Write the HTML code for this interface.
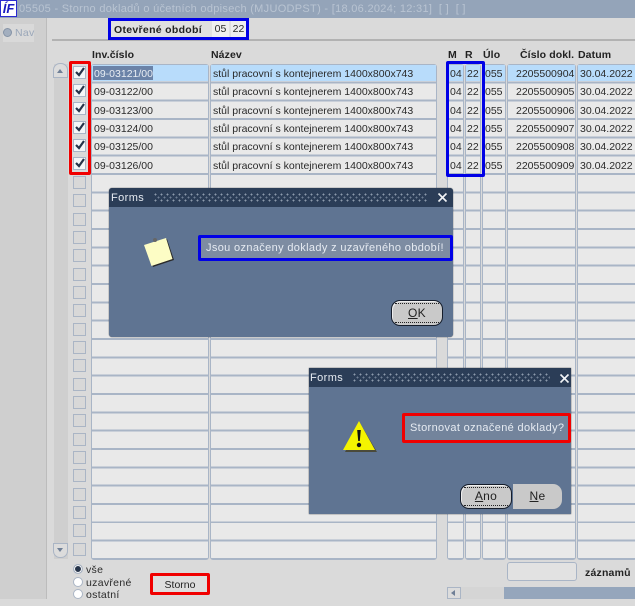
<!DOCTYPE html>
<html><head><meta charset="utf-8">
<style>
html,body{margin:0;padding:0;background:#dadada}
body{width:635px;height:599px;overflow:hidden;position:relative;background:#dadada;font-family:"Liberation Sans",sans-serif;font-size:10.5px;color:#2a2a2a;filter:blur(.3px)}
div,span{position:absolute;box-sizing:border-box;white-space:nowrap}
.col{top:64px;height:495.5px;background-color:#a9b5c6;background-image:repeating-linear-gradient(to bottom,#e9e9e9 0,#e9e9e9 16.35px,#a9b5c6 16.35px,#a9b5c6 18.33px);border:1px solid #a9b5c6;border-radius:3px}
.t{line-height:21px;height:21px}
.h{font-weight:bold;top:48px;line-height:14px;color:#222;font-size:10.5px;letter-spacing:.1px}
.cb{left:73px;width:13px;height:13px;background:#d8d8d8;border:1px solid #aab5c5}
.dlg{background:#5f7492;box-shadow:0 0 1px #222}
.dt{left:0;top:0;right:0;height:19px;background:#2b3d57}
.dots{top:5px;height:9px;background-image:radial-gradient(circle at 1.5px 1.5px,#8d9aac 0.8px,transparent 1px),radial-gradient(circle at 4.5px 4.5px,#6f7e94 0.8px,transparent 1px);background-size:6px 6px}
.w{color:#e6ebf2}
</style></head>
<body>
<!-- title -->
<div style="left:0;top:0;width:635px;height:18px;background:#94a4b9"></div>
<div style="left:0;top:0;width:17px;height:17px;background:#fff;border:1px solid #2a2ad0;color:#1a1ac0;font:italic bold 13px/15px 'Liberation Sans',sans-serif;text-align:center">ÍF</div>
<div style="left:19px;top:1px;line-height:16px;font-size:11px;color:#b9c4d2;letter-spacing:.3px">05505 - Storno dokladů o účetních odpisech (MJUODPST) - [18.06.2024; 12:31] &nbsp;[ ] &nbsp;[ ]</div>
<!-- left strip -->
<div style="left:0;top:18px;width:47px;height:581px;background:#cfcfcf;border-right:1px solid #bcbcbc"></div>
<div style="left:3px;top:24px;width:31px;height:18px;background:#d9d9d9"></div>
<div style="left:3px;top:28px;width:9px;height:9px;border-radius:50%;background:#a3afbf;border:1px solid #8593a6"></div>
<div style="left:15px;top:25px;line-height:16px;font-size:10.5px;color:#9aa7b9;letter-spacing:.3px">Nav</div>
<div style="left:47px;top:18px;width:588px;height:581px;background:#dadada"></div>
<div style="left:52px;top:39px;width:583px;height:2px;background:#b2b2b2"></div>
<!-- period -->
<div style="left:108px;top:18px;width:141px;height:22px;background:#e0e0e0;border:3px solid #0000e6"></div>
<div style="left:114px;top:22px;line-height:16px;font-weight:bold;font-size:10.5px;color:#222;letter-spacing:.3px">Otevřené období</div>
<div style="left:212px;top:21px;width:17px;height:16px;background:#efefef;line-height:17px;text-align:center">05</div>
<div style="left:231px;top:21px;width:15px;height:16px;background:#efefef;line-height:17px;text-align:center">22</div>
<!-- headers -->
<div class="h" style="left:92px">Inv.číslo</div>
<div class="h" style="left:211px">Název</div>
<div class="h" style="left:448px">M</div>
<div class="h" style="left:465px">R</div>
<div class="h" style="left:483px">Úlo</div>
<div class="h" style="left:520px">Číslo dokl.</div>
<div class="h" style="left:578px">Datum</div>
<!-- scrollbar -->
<div style="left:54px;top:64px;width:14px;height:495px;background:#cfcfcf"></div>
<div style="left:53px;top:63px;width:15px;height:15px;background:#dcdcdc;border:1px solid #aab5c5;border-radius:7px 7px 0 0"></div>
<div style="left:57px;top:69px;width:0;height:0;border:3.5px solid transparent;border-top:0;border-bottom:4px solid #6f7f96"></div>
<div style="left:53px;top:543px;width:15px;height:15px;background:#dcdcdc;border:1px solid #aab5c5;border-radius:0 0 7px 7px"></div>
<div style="left:57px;top:548px;width:0;height:0;border:3.5px solid transparent;border-bottom:0;border-top:4px solid #6f7f96"></div>
<!-- columns -->
<div class="col" style="left:91px;width:118px"></div>
<div class="col" style="left:210px;width:227px"></div>
<div class="col" style="left:447px;width:17px"></div>
<div class="col" style="left:465px;width:16px"></div>
<div class="col" style="left:482px;width:24px"></div>
<div class="col" style="left:507px;width:69px"></div>
<div class="col" style="left:577px;width:60px"></div>
<!-- current row -->
<div style="left:92px;top:65px;width:116px;height:16px;background:#b8dcfb"></div>
<div style="left:211px;top:65px;width:225px;height:16px;background:#b8dcfb"></div>
<div style="left:448px;top:65px;width:15px;height:16px;background:#b8dcfb"></div>
<div style="left:466px;top:65px;width:14px;height:16px;background:#b8dcfb"></div>
<div style="left:483px;top:65px;width:22px;height:16px;background:#b8dcfb"></div>
<div style="left:508px;top:65px;width:67px;height:16px;background:#b8dcfb"></div>
<div style="left:578px;top:65px;width:57px;height:16px;background:#b8dcfb"></div>
<div style="left:93px;top:66px;width:60px;height:14px;background:#6b83a8"></div>
<!-- empty checkboxes -->
<div class="cb" style="top:176px"></div><div class="cb" style="top:194px"></div><div class="cb" style="top:213px"></div><div class="cb" style="top:231px"></div><div class="cb" style="top:249px"></div><div class="cb" style="top:268px"></div><div class="cb" style="top:286px"></div><div class="cb" style="top:304px"></div><div class="cb" style="top:323px"></div><div class="cb" style="top:341px"></div><div class="cb" style="top:359px"></div><div class="cb" style="top:378px"></div><div class="cb" style="top:396px"></div><div class="cb" style="top:414px"></div><div class="cb" style="top:433px"></div><div class="cb" style="top:451px"></div><div class="cb" style="top:469px"></div><div class="cb" style="top:488px"></div><div class="cb" style="top:506px"></div><div class="cb" style="top:524px"></div><div class="cb" style="top:543px"></div>
<!-- checked boxes -->
<svg style="position:absolute;left:72px;top:64px" width="16" height="112" viewBox="0 0 16 112">
<g fill="#f4f6f8" stroke="#a9b5c6"><rect x="1.5" y="2.5" width="12" height="12"/><rect x="1.5" y="20.5" width="12" height="12"/><rect x="1.5" y="38.5" width="12" height="12"/><rect x="1.5" y="57.5" width="12" height="12"/><rect x="1.5" y="75.5" width="12" height="12"/><rect x="1.5" y="93.5" width="12" height="12"/></g>
<g fill="none" stroke="#26344a" stroke-width="2.2"><path d="M4 8l3 3 5-7"/><path d="M4 26l3 3 5-7"/><path d="M4 44l3 3 5-7"/><path d="M4 63l3 3 5-7"/><path d="M4 81l3 3 5-7"/><path d="M4 99l3 3 5-7"/></g>
</svg>
<!-- rows text -->
<div class="t" style="left:94px;top:64px;color:#e8edf3">09-03121/00</div>
<div class="t" style="left:94px;top:82px">09-03122/00</div>
<div class="t" style="left:94px;top:101px">09-03123/00</div>
<div class="t" style="left:94px;top:119px">09-03124/00</div>
<div class="t" style="left:94px;top:137px">09-03125/00</div>
<div class="t" style="left:94px;top:156px">09-03126/00</div>
<div class="t" style="left:213px;top:64px">stůl pracovní s kontejnerem 1400x800x743</div>
<div class="t" style="left:213px;top:82px">stůl pracovní s kontejnerem 1400x800x743</div>
<div class="t" style="left:213px;top:101px">stůl pracovní s kontejnerem 1400x800x743</div>
<div class="t" style="left:213px;top:119px">stůl pracovní s kontejnerem 1400x800x743</div>
<div class="t" style="left:213px;top:137px">stůl pracovní s kontejnerem 1400x800x743</div>
<div class="t" style="left:213px;top:156px">stůl pracovní s kontejnerem 1400x800x743</div>
<div class="t" style="left:450px;top:64px">04</div><div class="t" style="left:467px;top:64px">22</div><div class="t" style="left:485px;top:64px">055</div><div class="t" style="left:516px;top:64px">2205500904</div><div class="t" style="left:580px;top:64px">30.04.2022</div>
<div class="t" style="left:450px;top:82px">04</div><div class="t" style="left:467px;top:82px">22</div><div class="t" style="left:485px;top:82px">055</div><div class="t" style="left:516px;top:82px">2205500905</div><div class="t" style="left:580px;top:82px">30.04.2022</div>
<div class="t" style="left:450px;top:101px">04</div><div class="t" style="left:467px;top:101px">22</div><div class="t" style="left:485px;top:101px">055</div><div class="t" style="left:516px;top:101px">2205500906</div><div class="t" style="left:580px;top:101px">30.04.2022</div>
<div class="t" style="left:450px;top:119px">04</div><div class="t" style="left:467px;top:119px">22</div><div class="t" style="left:485px;top:119px">055</div><div class="t" style="left:516px;top:119px">2205500907</div><div class="t" style="left:580px;top:119px">30.04.2022</div>
<div class="t" style="left:450px;top:137px">04</div><div class="t" style="left:467px;top:137px">22</div><div class="t" style="left:485px;top:137px">055</div><div class="t" style="left:516px;top:137px">2205500908</div><div class="t" style="left:580px;top:137px">30.04.2022</div>
<div class="t" style="left:450px;top:156px">04</div><div class="t" style="left:467px;top:156px">22</div><div class="t" style="left:485px;top:156px">055</div><div class="t" style="left:516px;top:156px">2205500909</div><div class="t" style="left:580px;top:156px">30.04.2022</div>
<!-- highlight frames -->
<div style="left:69px;top:61px;width:22px;height:114px;border:3px solid #f00000;border-radius:2px"></div>
<div style="left:446px;top:61px;width:39px;height:116px;border:3px solid #0000e6;border-radius:2px"></div>
<!-- dialog 1 -->
<div class="dlg" style="left:109px;top:188px;width:344px;height:149px;border-radius:3px">
<div class="dt" style="border-radius:3px 3px 0 0"></div>
<div class="w" style="left:2px;top:3px;line-height:15px;font-size:11px;letter-spacing:.4px">Forms</div>
<div class="dots" style="left:45px;width:273px"></div>
<svg style="position:absolute;left:328px;top:4px" width="11" height="11"><path d="M1.5 1.5l8 8M9.5 1.5l-8 8" stroke="#f2f4f7" stroke-width="1.6"/></svg>
<svg style="position:absolute;left:32px;top:46px" width="36" height="36" viewBox="0 0 36 36">
<path d="M4 12L26 5 33 26 12 33Z" fill="#2a2a2a"/>
<path d="M3 11L25 4 31.5 25 10.5 32Z" fill="#fdfdc5"/>
<circle cx="14" cy="6" r="2" fill="#666"/>
</svg>
<div style="left:89px;top:47px;width:255px;height:26px;background:#7d8ca2;border:3px solid #0000e6;border-radius:2px"></div>
<div class="w" style="left:97px;top:50px;line-height:20px;font-size:11px;letter-spacing:.35px">Jsou označeny doklady z uzavřeného období!</div>
<div style="left:282px;top:112px;width:52px;height:26px;background:#c9c9c9;border:1px solid #151d2b;border-radius:9px;box-shadow:inset 1px 1px 0 #eee"></div>
<div style="left:286px;top:115px;width:44px;height:20px;border-top:1px dotted #222;border-bottom:1px dotted #222"></div>
<div style="left:282px;top:112px;width:52px;line-height:26px;text-align:center;font-size:12px;color:#222;letter-spacing:.3px"><u>O</u>K</div>
</div>
<!-- dialog 2 -->
<div class="dlg" style="left:309px;top:368px;width:262px;height:146px">
<div class="dt"></div>
<div class="w" style="left:1px;top:3px;line-height:15px;font-size:11px;letter-spacing:.4px">Forms</div>
<div class="dots" style="left:44px;width:197px"></div>
<svg style="position:absolute;left:250px;top:5px" width="11" height="11"><path d="M1.5 1.5l8 8M9.5 1.5l-8 8" stroke="#f2f4f7" stroke-width="1.6"/></svg>
<svg style="position:absolute;left:33px;top:52px" width="36" height="34" viewBox="0 0 36 34">
<path d="M18 3L35 32H3Z" fill="#4a4a3a"/>
<path d="M17 1L33 30H1Z" fill="#f4f400"/>
<path d="M15.2 10h3.6l-1 11h-1.6Z" fill="#111"/><circle cx="17" cy="25" r="2.2" fill="#111"/>
</svg>
<div style="left:93px;top:45px;width:169px;height:30px;background:#73849c;border:3px solid #f00000;border-radius:2px"></div>
<div class="w" style="left:101px;top:50px;line-height:21px;font-size:11px;letter-spacing:.35px">Stornovat označené doklady?</div>
<div style="left:151px;top:116px;width:52px;height:25px;background:#c9c9c9;border:1px solid #151d2b;border-radius:9px;box-shadow:inset 1px 1px 0 #eee"></div>
<div style="left:155px;top:119px;width:44px;height:19px;border-top:1px dotted #222;border-bottom:1px dotted #222"></div>
<div style="left:151px;top:116px;width:52px;line-height:25px;text-align:center;font-size:12px;color:#222;letter-spacing:.3px"><u>A</u>no</div>
<div style="left:204px;top:116px;width:49px;height:25px;background:#c9c9c9;border-radius:0 9px 9px 0;line-height:25px;text-align:center;font-size:12px;color:#222;letter-spacing:.3px"><u>N</u>e</div>
</div>
<!-- bottom -->
<div style="left:73px;top:564px;width:10px;height:10px;border-radius:50%;background:#26344a;border:1px solid #aab5c5;box-shadow:inset 0 0 0 1px #fff"></div>
<div style="left:73px;top:577px;width:10px;height:10px;border-radius:50%;background:#fff;border:1px solid #aab5c5"></div>
<div style="left:73px;top:589px;width:10px;height:10px;border-radius:50%;background:#fff;border:1px solid #aab5c5"></div>
<div class="t" style="left:86px;top:560px;letter-spacing:.3px">vše</div>
<div class="t" style="left:86px;top:573px;letter-spacing:.3px">uzavřené</div>
<div class="t" style="left:86px;top:585px;letter-spacing:.3px">ostatní</div>
<div style="left:150px;top:573px;width:60px;height:22px;background:#dedede;border:3px solid #f00000;border-radius:2px;line-height:18px;text-align:center;color:#222;font-size:10.5px">Storno</div>
<div style="left:507px;top:562px;width:70px;height:19px;background:#e2e2e2;border:1px solid #a9b5c6;border-radius:3px"></div>
<div class="t" style="left:585px;top:563px;font-weight:bold;color:#222;letter-spacing:.2px">záznamů</div>
<div style="left:447px;top:587px;width:188px;height:12px;background:#95a6bc"></div>
<div style="left:447px;top:587px;width:57px;height:12px;background:#d5d5d5"></div>
<div style="left:447px;top:587px;width:14px;height:12px;background:#dcdcdc;border:1px solid #aab5c5"></div>
<div style="left:451px;top:590px;width:0;height:0;border:3.5px solid transparent;border-left:0;border-right:4px solid #6f7f96"></div>
</body></html>
